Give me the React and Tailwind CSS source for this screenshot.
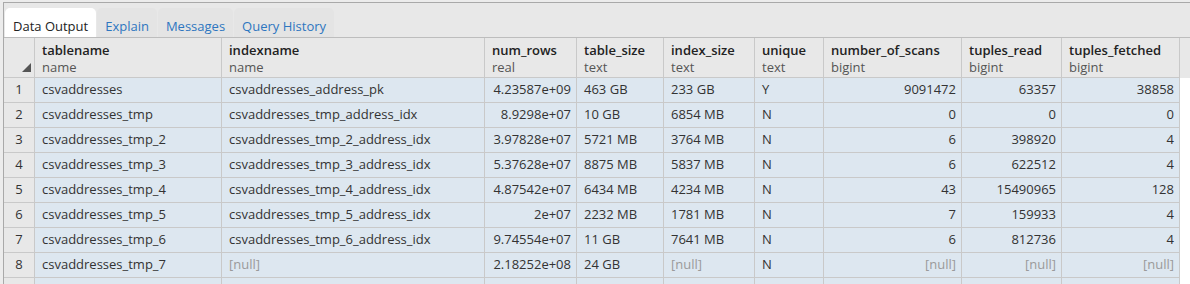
import React from "react";

const cols = [
  { name: "tablename", type: "name", align: "left" },
  { name: "indexname", type: "name", align: "left" },
  { name: "num_rows", type: "real", align: "right" },
  { name: "table_size", type: "text", align: "left" },
  { name: "index_size", type: "text", align: "left" },
  { name: "unique", type: "text", align: "left" },
  { name: "number_of_scans", type: "bigint", align: "right" },
  { name: "tuples_read", type: "bigint", align: "right" },
  { name: "tuples_fetched", type: "bigint", align: "right" },
];

const N = null;
const rows = [
  ["csvaddresses", "csvaddresses_address_pk", "4.23587e+09", "463 GB", "233 GB", "Y", "9091472", "63357", "38858"],
  ["csvaddresses_tmp", "csvaddresses_tmp_address_idx", "8.9298e+07", "10 GB", "6854 MB", "N", "0", "0", "0"],
  ["csvaddresses_tmp_2", "csvaddresses_tmp_2_address_idx", "3.97828e+07", "5721 MB", "3764 MB", "N", "6", "398920", "4"],
  ["csvaddresses_tmp_3", "csvaddresses_tmp_3_address_idx", "5.37628e+07", "8875 MB", "5837 MB", "N", "6", "622512", "4"],
  ["csvaddresses_tmp_4", "csvaddresses_tmp_4_address_idx", "4.87542e+07", "6434 MB", "4234 MB", "N", "43", "15490965", "128"],
  ["csvaddresses_tmp_5", "csvaddresses_tmp_5_address_idx", "2e+07", "2232 MB", "1781 MB", "N", "7", "159933", "4"],
  ["csvaddresses_tmp_6", "csvaddresses_tmp_6_address_idx", "9.74554e+07", "11 GB", "7641 MB", "N", "6", "812736", "4"],
  ["csvaddresses_tmp_7", N, "2.18252e+08", "24 GB", N, "N", N, N, N],
];

const grid = "grid grid-cols-[31px_187px_263px_92px_87px_91px_69px_138px_100px_118px]";

export default function App() {
  return (
    <div
      className="w-[1190px] h-[284px] overflow-hidden bg-[#ececec] pt-[2px] pl-[3px] text-[13px] text-[#222]"
      style={{ fontFamily: '"Open Sans", "Liberation Sans", sans-serif' }}
    >
      <div className="h-full border-t border-l border-[#a9a9a9] flex flex-col">
        {/* Tabs */}
        <div className="h-[35px] shrink-0 bg-[#e8e8e8] border-b border-[#bdbdbd] flex items-end pl-px gap-px">
          <div className="h-[29px] px-2 flex items-center bg-white rounded-t-[5px] text-[#222] pt-[8px]">Data Output</div>
          <div className="h-[29px] px-2 flex items-center bg-[#e4e4e4] rounded-t-[5px] text-[#2e76c0] pt-[8px]">Explain</div>
          <div className="h-[29px] px-2 flex items-center bg-[#e4e4e4] rounded-t-[5px] text-[#2e76c0] pt-[8px]">Messages</div>
          <div className="h-[29px] px-2 flex items-center bg-[#e4e4e4] rounded-t-[5px] text-[#2e76c0] pt-[8px]">Query History</div>
        </div>
        {/* Grid */}
        <div className="flex-1 bg-white">
          <div className={`${grid} bg-[#e8e8e8]`}>
            <div className="h-[40px] border-r border-b border-[#c9c9c9] relative">
              <svg className="absolute right-[3px] bottom-[5px]" width="9" height="9" viewBox="0 0 9 9">
                <polygon points="9,0 9,9 0,9" fill="#555" />
              </svg>
            </div>
            {cols.map((c) => (
              <div key={c.name} className="h-[40px] border-r border-b border-[#c9c9c9] px-[7px] pt-[4px] leading-[17px]">
                <div className="font-semibold text-[#222]">{c.name}</div>
                <div className="text-[#555]">{c.type}</div>
              </div>
            ))}
          </div>
          {rows.map((r, i) => (
            <div key={i} className={grid}>
              <div className="h-[25px] border-r border-b border-[#c9c9c9] bg-[#e8e8e8] flex items-center justify-center text-[#333]">
                {i + 1}
              </div>
              {r.map((v, j) => (
                <div
                  key={j}
                  className={`h-[25px] border-r border-b border-[#c9c9c9] bg-[#dde7f0] flex items-center px-[7px] whitespace-nowrap overflow-hidden ${
                    cols[j].align === "right" ? "justify-end pr-[5px]" : ""
                  } ${v === null ? "text-[#9a9a9a]" : "text-[#333]"}`}
                >
                  {v === null ? "[null]" : v}
                </div>
              ))}
            </div>
          ))}
          <div className={grid}>
            <div className="h-[25px] border-r border-[#c9c9c9] bg-[#e8e8e8]" />
            {cols.map((c) => (
              <div key={c.name} className="h-[25px] border-r border-[#c9c9c9] bg-[#dde7f0]" />
            ))}
          </div>
        </div>
      </div>
    </div>
  );
}
